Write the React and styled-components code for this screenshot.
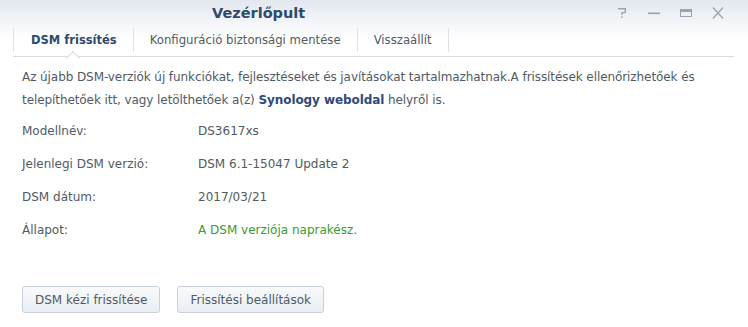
import React from 'react';
import styled, { createGlobalStyle } from 'styled-components';

const GlobalStyle = createGlobalStyle`
  html, body {
    margin: 0;
    padding: 0;
    background: #ffffff;
  }
  body {
    font-family: "DejaVu Sans", Verdana, sans-serif;
    font-size: 12px;
    color: #505a64;
  }
`;

const Window = styled.div`
  width: 748px;
  height: 327px;
  background: #ffffff;
  overflow: hidden;
  display: flex;
  flex-direction: column;
`;

const Header = styled.div`
  background: linear-gradient(to bottom, #e3e8ef 0px, #f4f6f9 24px, #ffffff 40px);
`;

const TitleBar = styled.div`
  height: 26px;
  display: flex;
  align-items: center;
`;

const Title = styled.div`
  flex: 1;
  padding-left: 212px;
  font-size: 14.5px;
  font-weight: bold;
  color: #2e4a6e;
  line-height: 26px;
`;

const Controls = styled.div`
  display: flex;
  align-items: center;
  padding-right: 14px;
`;

const ControlButton = styled.div`
  width: 32px;
  height: 26px;
  display: flex;
  align-items: center;
  justify-content: center;
  color: #9ba4ae;

  svg {
    display: block;
  }
`;

const TabBar = styled.div`
  margin: 0 14px 0 13px;
  height: 31px;
  display: flex;
  align-items: flex-start;
  padding-top: 2px;
  box-sizing: border-box;
  border-bottom: 1px solid #d5dbe2;
`;

const Tab = styled.div`
  position: relative;
  height: 24px;
  line-height: 24px;
  padding: 0 16px 0 ${p => (p.$first ? 17 : 16)}px;
  border-right: 1px solid #dde2e8;
  border-left: ${p => (p.$first ? '1px solid #dde2e8' : 'none')};
  font-size: ${p => (p.$active ? 11.5 : 11.7)}px;
  font-weight: ${p => (p.$active ? 'bold' : 'normal')};
  color: ${p => (p.$active ? '#2e4a6e' : '#505a64')};
  white-space: nowrap;
`;

const Notch = styled.span`
  position: absolute;
  left: 50%;
  bottom: -6px;
  width: 9px;
  height: 9px;
  margin-left: -5px;
  margin-bottom: -5px;
  background: #ffffff;
  border-left: 1px solid #d5dbe2;
  border-top: 1px solid #d5dbe2;
  transform: rotate(45deg);
`;

const Content = styled.div`
  padding: 9px 22px 0 22px;
  display: flex;
  flex-direction: column;
`;

const Intro = styled.p`
  margin: 0;
  line-height: 23px;
  letter-spacing: -0.08px;
`;

const Link = styled.a`
  font-weight: bold;
  color: #2e4a7a;
  text-decoration: none;
`;

const InfoList = styled.div`
  margin-top: 2px;
  display: flex;
  flex-direction: column;
`;

const InfoRow = styled.div`
  height: 33px;
  display: flex;
  align-items: center;
`;

const Label = styled.div`
  width: 176px;
  flex-shrink: 0;
`;

const Value = styled.div`
  color: ${p => (p.$ok ? '#3b9b2f' : '#505a64')};
`;

const Actions = styled.div`
  margin-top: 40px;
  display: flex;
  gap: 17px;
`;

const Button = styled.button`
  height: 27px;
  padding: 0 12px;
  font-family: inherit;
  font-size: 12px;
  color: #505a64;
  border: 1px solid #c8d1da;
  border-radius: 3px;
  background: linear-gradient(to bottom, #f8fafc, #e9eef3);
  cursor: pointer;
`;

const HelpIcon = () => (
  <svg width="12" height="12" viewBox="0 0 12 12" fill="none" stroke="currentColor" strokeWidth="1.4">
    <path d="M2 1.7H9.3V5.6H6V8" />
    <rect x="5.3" y="9.4" width="1.4" height="1.6" fill="currentColor" stroke="none" />
  </svg>
);

const MinimizeIcon = () => (
  <svg width="14" height="12" viewBox="0 0 14 12">
    <rect x="1" y="5.5" width="12" height="1.6" fill="currentColor" />
  </svg>
);

const MaximizeIcon = () => (
  <svg width="14" height="12" viewBox="0 0 14 12" fill="none">
    <rect x="1.5" y="2.5" width="11" height="7" stroke="currentColor" strokeWidth="1" />
    <rect x="1.5" y="2.5" width="11" height="2.5" fill="currentColor" />
  </svg>
);

const CloseIcon = () => (
  <svg width="14" height="14" viewBox="0 0 14 14" fill="none" stroke="currentColor" strokeWidth="1.3">
    <path d="M2 1.5L12 12.5M12 1.5L2 12.5" />
  </svg>
);

const info = [
  { label: 'Modellnév:', value: 'DS3617xs' },
  { label: 'Jelenlegi DSM verzió:', value: 'DSM 6.1-15047 Update 2' },
  { label: 'DSM dátum:', value: '2017/03/21' },
  { label: 'Állapot:', value: 'A DSM verziója naprakész.', ok: true },
];

export default function App() {
  return (
    <>
      <GlobalStyle />
      <Window>
        <Header>
          <TitleBar>
            <Title>Vezérlőpult</Title>
            <Controls>
              <ControlButton><HelpIcon /></ControlButton>
              <ControlButton><MinimizeIcon /></ControlButton>
              <ControlButton><MaximizeIcon /></ControlButton>
              <ControlButton><CloseIcon /></ControlButton>
            </Controls>
          </TitleBar>
          <TabBar>
            <Tab $first $active>
              DSM frissítés
              <Notch />
            </Tab>
            <Tab>Konfiguráció biztonsági mentése</Tab>
            <Tab>Visszaállít</Tab>
          </TabBar>
        </Header>
        <Content>
          <Intro>
            Az újabb DSM-verziók új funkciókat, fejlesztéseket és javításokat tartalmazhatnak.A frissítések ellenőrizhetőek és telepíthetőek itt, vagy letölthetőek a(z) <Link href="#">Synology weboldal</Link> helyről is.
          </Intro>
          <InfoList>
            {info.map(row => (
              <InfoRow key={row.label}>
                <Label>{row.label}</Label>
                <Value $ok={row.ok}>{row.value}</Value>
              </InfoRow>
            ))}
          </InfoList>
          <Actions>
            <Button>DSM kézi frissítése</Button>
            <Button>Frissítési beállítások</Button>
          </Actions>
        </Content>
      </Window>
    </>
  );
}
